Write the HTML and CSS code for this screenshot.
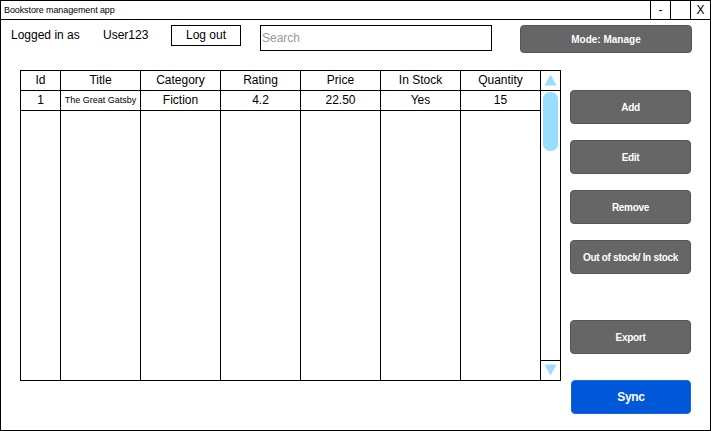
FILE: index.html
```html
<!DOCTYPE html>
<html>
<head>
<meta charset="utf-8">
<link rel="stylesheet" href="styles.css">
</head>
<body>
<div class="window">
  <div class="titlebar">
    <span class="title">Bookstore management app</span>
    <div class="ctrl">-</div>
    <div class="ctrl"></div>
    <div class="ctrl">X</div>
  </div>
  <div class="topbar">
    <span class="label">Logged in as</span>
    <span class="user">User123</span>
    <div class="logout">Log out</div>
    <div class="search">Search</div>
    <div class="btn mode">Mode: Manage</div>
  </div>
  <div class="content">
    <div class="table">
      <div class="col c-id"><div class="th">Id</div><div class="td">1</div></div>
      <div class="col"><div class="th">Title</div><div class="td small">The Great Gatsby</div></div>
      <div class="col"><div class="th">Category</div><div class="td">Fiction</div></div>
      <div class="col"><div class="th">Rating</div><div class="td">4.2</div></div>
      <div class="col"><div class="th">Price</div><div class="td">22.50</div></div>
      <div class="col"><div class="th">In Stock</div><div class="td">Yes</div></div>
      <div class="col"><div class="th">Quantity</div><div class="td">15</div></div>
      <div class="scroll">
        <div class="arrow up"><svg width="19" height="19" viewBox="0 0 19 19"><polygon points="3.5,14.5 9.5,3.5 15.5,14.5" fill="#99ddff"/></svg></div>
        <div class="track"><div class="thumb"></div></div>
        <div class="arrow down"><svg width="19" height="19" viewBox="0 0 19 19"><polygon points="3.5,3.5 15.5,3.5 9.5,14.5" fill="#99ddff"/></svg></div>
      </div>
    </div>
    <div class="actions">
      <div class="btn act">Add</div>
      <div class="btn act">Edit</div>
      <div class="btn act">Remove</div>
      <div class="btn act">Out of stock/ In stock</div>
      <div class="btn act export">Export</div>
      <div class="btn sync">Sync</div>
    </div>
  </div>
</div>
</body>
</html>
```

FILE: styles.css
```css
* { box-sizing: border-box; }
html, body { margin: 0; padding: 0; background: #fff; }
body { font-family: "Liberation Sans", Arial, sans-serif; color: #000; }

.window {
  width: 711px;
  height: 431px;
  border: 1px solid #000;
  display: flex;
  flex-direction: column;
}

.titlebar {
  height: 19px;
  border-bottom: 1px solid #000;
  display: flex;
  align-items: stretch;
  flex-shrink: 0;
}
.title {
  font-size: 9px;
  line-height: 18px;
  padding-left: 3px;
  letter-spacing: -0.1px;
}
.ctrl {
  width: 20px;
  border-left: 1px solid #000;
  font-size: 12px;
  line-height: 18px;
  text-align: center;
}
.ctrl:nth-of-type(1) { margin-left: auto; }

.topbar {
  height: 50px;
  padding: 5px 0 0 10px;
  display: flex;
  align-items: flex-start;
  font-size: 12px;
  flex-shrink: 0;
}
.label { width: 92px; line-height: 21px; }
.user { width: 68px; line-height: 21px; }
.logout {
  width: 70px;
  height: 21px;
  border: 1px solid #000;
  text-align: center;
  line-height: 19px;
}
.search {
  margin-left: 19px;
  width: 232px;
  height: 26px;
  border: 1px solid #000;
  color: #999;
  line-height: 24px;
  padding-left: 1px;
}
.btn {
  background: #666;
  border: 1px solid #555;
  border-radius: 4px;
  color: #fff;
  font-weight: bold;
  font-size: 10px;
  display: flex;
  align-items: center;
  justify-content: center;
}
.mode {
  margin-left: 28px;
  width: 172px;
  height: 28px;
}

.content {
  display: flex;
  align-items: flex-start;
  padding-left: 19px;
}
.table {
  width: 541px;
  height: 311px;
  border: 1px solid #000;
  display: flex;
}
.col {
  width: 80px;
  border-right: 1px solid #000;
  display: flex;
  flex-direction: column;
  font-size: 12px;
}
.col.c-id { width: 40px; }
.th, .td {
  height: 20px;
  border-bottom: 1px solid #000;
  text-align: center;
  line-height: 19px;
}
.td.small { font-size: 9px; }
.scroll {
  width: 19px;
  display: flex;
  flex-direction: column;
}
.arrow { height: 20px; }
.arrow svg { display: block; }
.arrow.up { border-bottom: 1px solid #000; }
.arrow.down { border-top: 1px solid #000; }
.track { flex: 1; padding: 1px 0 0 2px; }
.thumb {
  width: 15px;
  height: 59px;
  background: #99ddff;
  border-radius: 7px;
}

.actions {
  margin-left: 9px;
  width: 121px;
  padding-top: 20px;
  display: flex;
  flex-direction: column;
}
.act {
  height: 34px;
  margin-bottom: 16px;
  letter-spacing: -0.3px;
}
.act.export { margin-top: 30px; margin-bottom: 26px; }
.sync {
  margin-left: 1px;
  width: 120px;
  height: 34px;
  background: #0057d8;
  border-color: #1a66dd;
  font-size: 12px;
  letter-spacing: -0.3px;
}
```
